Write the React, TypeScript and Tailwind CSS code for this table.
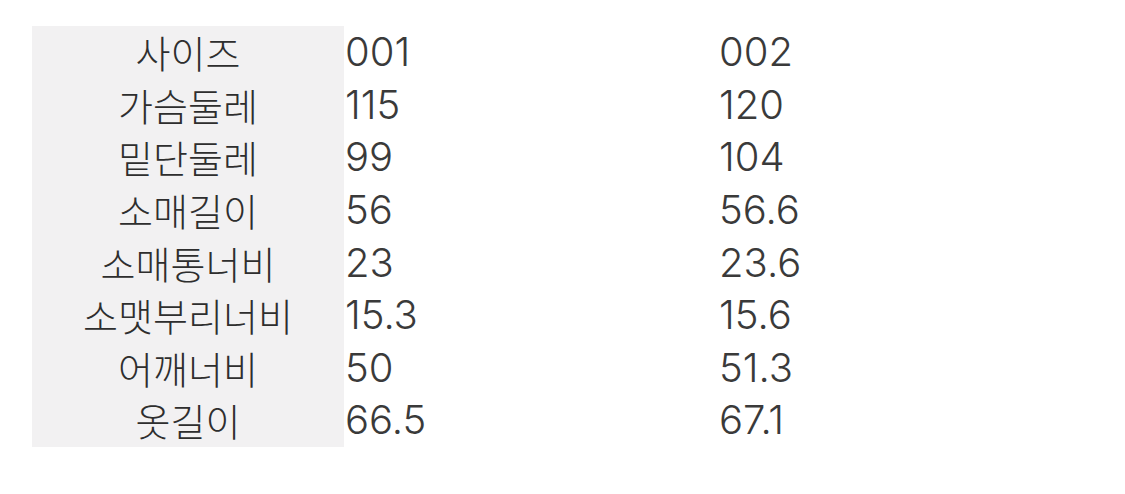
const rows: [string, string, string][] = [
  ["사이즈", "001", "002"],
  ["가슴둘레", "115", "120"],
  ["밑단둘레", "99", "104"],
  ["소매길이", "56", "56.6"],
  ["소매통너비", "23", "23.6"],
  ["소맷부리너비", "15.3", "15.6"],
  ["어깨너비", "50", "51.3"],
  ["옷길이", "66.5", "67.1"],
];

export default function App() {
  return (
    <div
      className="w-[1125px] h-[494px] bg-white pt-[26px] pl-[32px] text-[#333333]"
      style={{ fontFamily: '"Noto Sans CJK KR", "Noto Sans", sans-serif' }}
    >
      <div className="flex flex-col">
        {rows.map(([label, a, b]) => (
          <div key={label} className="flex h-[52.6px] items-center text-[38px] leading-none">
            <div className="w-[312px] h-full bg-[#f2f1f2] flex items-center justify-center font-light text-[#2e2e2e]">
              {label}
            </div>
            <div
              className="w-[375px] pl-[1px] text-[40px] font-light text-[#3a3a3a]"
              style={{ fontFamily: 'Inter, "Noto Sans CJK KR", sans-serif' }}
            >
              {a}
            </div>
            <div
              className="text-[40px] font-light text-[#3a3a3a]"
              style={{ fontFamily: 'Inter, "Noto Sans CJK KR", sans-serif' }}
            >
              {b}
            </div>
          </div>
        ))}
      </div>
    </div>
  );
}
